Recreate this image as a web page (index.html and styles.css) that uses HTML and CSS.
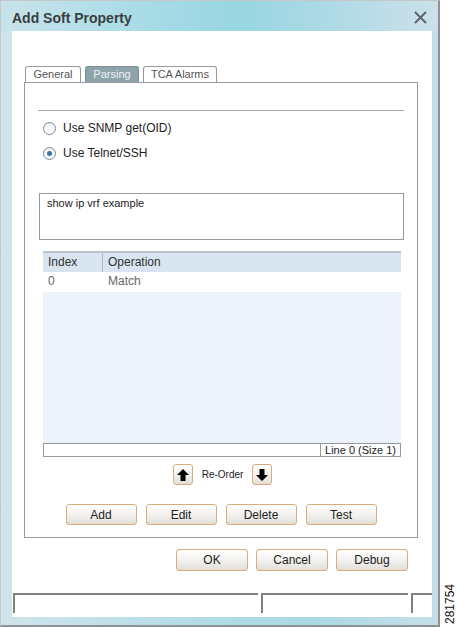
FILE: index.html
```html
<!DOCTYPE html>
<html lang="en">
<head>
    <meta charset="UTF-8">
    <title>Add Soft Property</title>
    <link rel="stylesheet" href="styles.css">
</head>
<body>
    <div class="window">
        <div class="titlebar">
            <span class="title">Add Soft Property</span>
            <svg class="close" width="13" height="13" viewBox="0 0 13 13">
                <path d="M1 1 L12 12 M12 1 L1 12" stroke="#5a6266" stroke-width="1.8" fill="none"/>
            </svg>
        </div>
        <div class="client">
            <div class="tabs">
                <div class="tab">General</div>
                <div class="tab active">Parsing</div>
                <div class="tab">TCA Alarms</div>
            </div>
            <div class="panel">
                <div class="sep"></div>
                <div class="radio first"><span class="dot"></span>Use SNMP get(OID)</div>
                <div class="radio"><span class="dot checked"></span>Use Telnet/SSH</div>
                <div class="textarea">show ip vrf example</div>
                <div class="grid">
                    <div class="grid-head">
                        <div class="col-index">Index</div>
                        <div class="col-op">Operation</div>
                    </div>
                    <div class="grid-row">
                        <div class="col-index">0</div>
                        <div class="col-op">Match</div>
                    </div>
                    <div class="grid-fill"></div>
                    <div class="grid-status">
                        <div class="status-blank"></div>
                        <div class="status-cell">Line 0 (Size 1)</div>
                    </div>
                </div>
                <div class="reorder">
                    <button class="btn arrow">
                        <svg width="14" height="14" viewBox="0 0 14 14"><polygon points="7,1 13,7 9.5,7 9.5,13 4.5,13 4.5,7 1,7" fill="#000"/></svg>
                    </button>
                    <span class="reorder-label">Re-Order</span>
                    <button class="btn arrow">
                        <svg width="14" height="14" viewBox="0 0 14 14"><polygon points="7,13 13,7 9.5,7 9.5,1 4.5,1 4.5,7 1,7" fill="#000"/></svg>
                    </button>
                </div>
                <div class="actions">
                    <button class="btn">Add</button>
                    <button class="btn">Edit</button>
                    <button class="btn">Delete</button>
                    <button class="btn">Test</button>
                </div>
            </div>
            <div class="dialog-buttons">
                <button class="btn big">OK</button>
                <button class="btn big">Cancel</button>
                <button class="btn big">Debug</button>
            </div>
            <div class="statusbar">
                <div class="field f1"></div>
                <div class="field f2"></div>
                <div class="field f3"></div>
            </div>
        </div>
    </div>
    <div class="fig-id">281754</div>
</body>
</html>
```

FILE: styles.css
```css
body {
    margin: 0;
    width: 457px;
    height: 628px;
    overflow: hidden;
    display: flex;
    background: #fff;
    font-family: 'Liberation Sans', Arial, sans-serif;
    font-size: 12px;
    color: #222;
}
.window {
    width: 440px;
    height: 624px;
    border-top: 1px solid #c4c8ca;
    border-left: 1px solid #c4c8ca;
    border-right: 2px solid #8e9294;
    border-bottom: 2px solid #8e9294;
    background: linear-gradient(to right, #cfe4eb, #b6dde7 40%, #a9d9e4 70%, #c5dfe9);
    display: flex;
    flex-direction: column;
}
.titlebar {
    height: 30px;
    display: flex;
    align-items: center;
    justify-content: space-between;
    padding: 0 11px 0 11px;
    background: linear-gradient(to right, #c8e3ea, #a6dbe6 35%, #98d6e3 55%, #b3dbe6 80%, #cbe1ea);
}
.title {
    font-family: 'Liberation Sans', Arial, sans-serif;
    font-weight: bold;
    font-size: 14px;
    color: #3a3f42;
    margin-top: 3px;
}
.close {
    margin-top: 2px;
}
.client {
    width: 420px;
    height: 586px;
    margin-left: 11px;
    background: #fff;
    display: flex;
    flex-direction: column;
}
.tabs {
    display: flex;
    gap: 4px;
    margin: 35px 0 0 13px;
    height: 16px;
}
.tab {
    height: 15px;
    line-height: 15px;
    padding: 0 6px;
    border: 1px solid #9a9a9a;
    border-bottom: none;
    border-radius: 3px 3px 0 0;
    color: #555;
    font-size: 11px;
    text-align: center;
    background: #fff;
}
.tab:first-child { width: 42px; }
.tab:nth-child(2) { width: 40px; }
.tab:nth-child(3) { width: 60px; }
.tab.active {
    background: #8fa3aa;
    border-color: #7d9098;
    color: #eef3f5;
}
.panel {
    margin: 0 14px 0 12px;
    border: 1px solid #9a9a9a;
    padding: 27px 0 12px 0;
    display: flex;
    flex-direction: column;
}
.sep {
    height: 1px;
    background: #a8a8a8;
    margin: 0 13px 0 13px;
}
.radio {
    height: 20px;
    display: flex;
    align-items: center;
    margin: 5px 0 0 18px;
    font-size: 12px;
    color: #222;
}
.radio.first {
    margin-top: 7px;
}
.dot {
    width: 11px;
    height: 11px;
    border: 1px solid #7b8a91;
    border-radius: 50%;
    background: linear-gradient(#f0f0f0, #fff);
    margin-right: 7px;
    display: flex;
    align-items: center;
    justify-content: center;
}
.dot.checked::after {
    content: "";
    width: 5px;
    height: 5px;
    border-radius: 50%;
    background: #2f7aa0;
}
.textarea {
    height: 39px;
    margin: 30px 13px 0 14px;
    border: 1px solid #8f9ba1;
    padding: 3px 7px;
    font-size: 11px;
    color: #222;
}
.grid {
    margin: 11px 16px 0 18px;
    display: flex;
    flex-direction: column;
}
.grid-head {
    display: flex;
    height: 19px;
    border-top: 2px solid #b8c3cd;
    background: #d8e4ef;
    color: #333;
}
.grid-head .col-index {
    border-right: 1px solid #b0bcc7;
}
.col-index {
    width: 54px;
    padding-left: 5px;
    line-height: 19px;
}
.col-op {
    padding-left: 5px;
    line-height: 19px;
}
.grid-row {
    display: flex;
    height: 20px;
    color: #666;
    background: #fff;
}
.grid-row .col-index {
    width: 55px;
}
.grid-fill {
    height: 151px;
    background: #eef2fa;
}
.grid-status {
    height: 12px;
    border: 1px solid #999;
    display: flex;
    font-size: 11px;
    line-height: 12px;
}
.status-blank {
    flex: 1;
}
.status-cell {
    border-left: 1px solid #999;
    padding: 0 4px;
    color: #222;
}
.btn {
    height: 21px;
    width: 71px;
    border: 1px solid #d8ad7e;
    border-radius: 3px;
    background: linear-gradient(#ffffff, #f3f2ef 50%, #e2e0db);
    box-shadow: inset 0 -1px 0 #eadcc8;
    font-family: 'Liberation Sans', Arial, sans-serif;
    font-size: 12px;
    color: #222;
    padding: 0;
}
.reorder {
    height: 21px;
    margin-top: 7px;
    display: flex;
    justify-content: center;
    align-items: center;
    gap: 8px;
    margin-left: 3px;
}
.btn.arrow {
    width: 20px;
    display: flex;
    align-items: center;
    justify-content: center;
}
.reorder-label {
    font-size: 10px;
    white-space: nowrap;
    margin: 0 1px;
}
.actions {
    margin-top: 19px;
    display: flex;
    justify-content: center;
    gap: 9px;
}
.dialog-buttons {
    margin: 11px 24px 0 0;
    display: flex;
    justify-content: flex-end;
    gap: 8px;
}
.btn.big {
    height: 22px;
    width: 72px;
}
.statusbar {
    margin: 22px 0 0 1px;
    display: flex;
    gap: 3px;
}
.field {
    height: 18px;
    border-top: 2px solid #808080;
    border-left: 2px solid #808080;
}
.f1 { width: 244px; }
.f2 { width: 146px; }
.f3 { width: 19px; }
.fig-id {
    writing-mode: vertical-rl;
    transform: rotate(180deg);
    align-self: flex-end;
    margin: 0 0 4px 3px;
    font-size: 12px;
    color: #111;
}
```
